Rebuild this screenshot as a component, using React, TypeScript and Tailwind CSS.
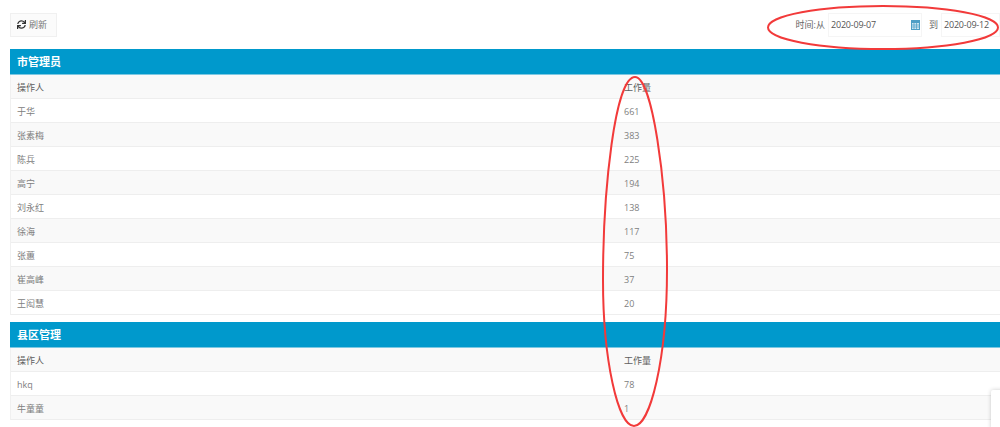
import { FaSync } from "react-icons/fa";

type Row = { name: string; count: string };

const cityRows: Row[] = [
  { name: "于华", count: "661" },
  { name: "张素梅", count: "383" },
  { name: "陈兵", count: "225" },
  { name: "高宁", count: "194" },
  { name: "刘永红", count: "138" },
  { name: "徐海", count: "117" },
  { name: "张蕙", count: "75" },
  { name: "崔高峰", count: "37" },
  { name: "王闳慧", count: "20" },
];

const countyRows: Row[] = [
  { name: "hkq", count: "78" },
  { name: "牛童童", count: "1" },
];

function CalendarIcon() {
  return (
    <svg width="9" height="10" viewBox="0 0 9 10" className="shrink-0">
      <rect x="0" y="0" width="9" height="10" fill="#4f9fc6" />
      <rect x="1" y="3" width="7" height="6" fill="#cfe6f1" />
      <path d="M3 3v6M5.500 3v6M1 5h7M1 7h7" stroke="#4f9fc6" strokeWidth="0.7" />
    </svg>
  );
}

function Panel({ title, rows }: { title: string; rows: Row[] }) {
  return (
    <section>
      <h2 className="h-[26px] pl-[7px] pt-[2px] flex items-center bg-[#0099cc] border-b border-[#7cc8e2] text-[11px] font-bold text-white">
        {title}
      </h2>
      <div className="border-l border-[#f0f0f0]">
        <div className="grid grid-cols-[606px_1fr] h-6 items-center pt-[3px] bg-[#f9f9f9] border-b border-[#eeeeee] text-[9px] text-[#5e5e5e]">
          <div className="pl-[6px]">操作人</div>
          <div className="pl-[7px]">工作量</div>
        </div>
        {rows.map((row) => (
          <div
            key={row.name}
            className="grid grid-cols-[606px_1fr] h-6 items-center pt-[3px] border-b border-[#eeeeee] odd:bg-[#f9f9f9] text-[9px] text-[#808080]"
          >
            <div className="pl-[6px]">{row.name}</div>
            <div className="pl-[7px]">{row.count}</div>
          </div>
        ))}
      </div>
    </section>
  );
}

export default function App() {
  return (
    <div className="relative h-[427px] overflow-hidden bg-white pl-[10px] font-['Open_Sans','Noto_Sans_CJK_SC',sans-serif]">
      <div className="flex h-[49px] items-center justify-between">
        <button className="flex h-6 w-[47px] items-center gap-[3px] border border-[#f0f0f0] bg-[#fbfbfb] pl-[6px] text-[9px] text-[#777777]">
          <FaSync className="text-[9px] text-[#333333]" />
          刷新
        </button>
        <div className="flex items-center text-[9px] text-[#666666]">
          <span className="mr-[3px]">时间:从</span>
          <div className="flex h-6 w-[94px] items-center justify-between border border-[#f5f5f5] pl-[2px] pr-px text-[#555555]">
            <span className="tracking-[-0.2px]">2020-09-07</span>
            <CalendarIcon />
          </div>
          <span className="ml-[7px] mr-[3px]">到</span>
          <div className="flex h-6 w-[59px] items-center border border-[#f5f5f5] pl-[2px] text-[#555555]">
            <span className="tracking-[-0.2px]">2020-09-12</span>
          </div>
        </div>
      </div>

      <Panel title="市管理员" rows={cityRows} />
      <div className="h-[7px]" />
      <Panel title="县区管理" rows={countyRows} />

      {/* hand-drawn annotations on top of the screenshot */}
      <svg className="pointer-events-none absolute left-0 top-0" width="1000" height="427" fill="none">
        <ellipse cx="883" cy="27.500" rx="115" ry="21.500" stroke="#f23a3a" strokeWidth="2" />
        <path
          d="M635 77C615 77 603 190 603 280C603 360 618 426 634 426C650 426 667 360 667 270C667 180 652 77 635 77Z"
          stroke="#f23a3a"
          strokeWidth="2"
        />
      </svg>

      <div className="absolute left-[991px] top-[390px] h-[40px] w-[20px] rounded-[2px] bg-white shadow-[0_0_4px_rgba(0,0,0,0.2)]" />
    </div>
  );
}
